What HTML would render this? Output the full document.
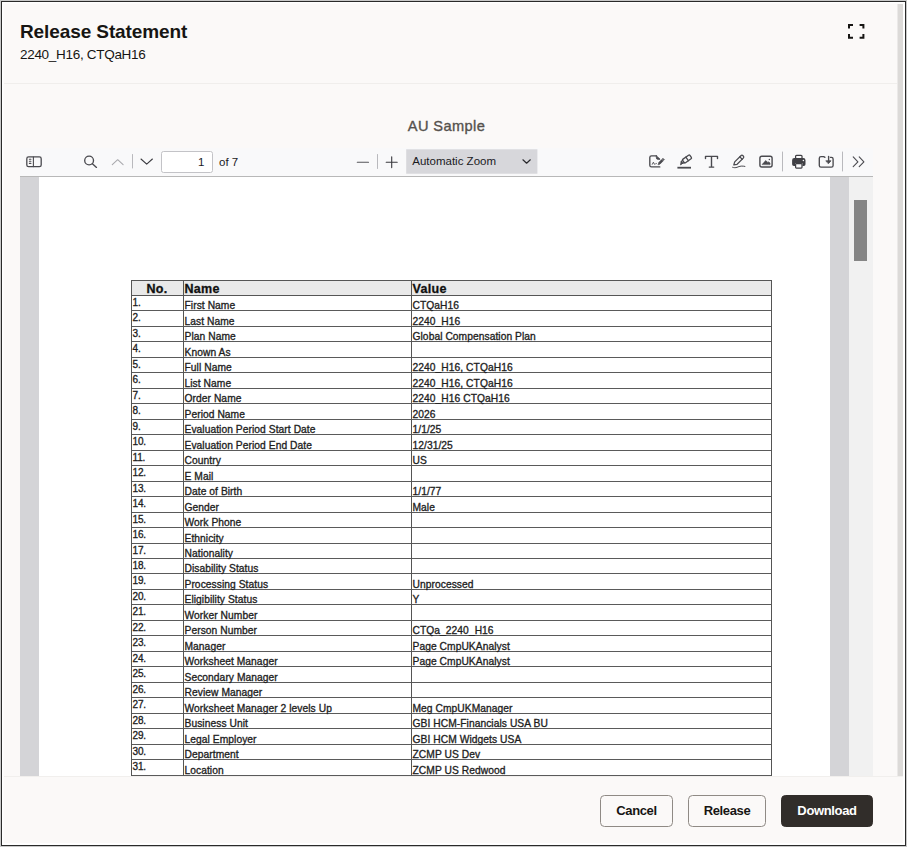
<!DOCTYPE html>
<html lang="en">
<head>
<meta charset="utf-8">
<title>Release Statement</title>
<style>
*{box-sizing:border-box}
html,body{margin:0;padding:0}
body{width:907px;height:847px;overflow:hidden;background:#c9c9c9;font-family:"Liberation Sans",sans-serif;position:relative}
#frame{position:absolute;left:1px;top:1px;width:905px;height:845px;border:1px solid #2a2a2a;background:#fff}
#panel{position:absolute;left:3px;top:3px;width:900px;height:840px;background:#fbf9f8;overflow:hidden;border-left:1px solid #fdfcfc;border-top:1px solid #fdfcfc}
#rstrip{position:absolute;left:897px;top:4px;width:6px;height:772px;background:#dcdad8;border-left:1px solid #ebe9e8}
#rwhite{position:absolute;left:903px;top:2px;width:2px;height:843px;background:#fff}
h1{position:absolute;left:20px;top:19.6px;margin:0;font-size:19px;line-height:24px;font-weight:700;color:#161513;white-space:nowrap;letter-spacing:-0.1px}
#sub{position:absolute;left:20px;top:46px;font-size:13.5px;line-height:18px;color:#161513;white-space:nowrap;letter-spacing:-0.3px}
#hline{position:absolute;left:4px;top:83px;width:893px;height:1px;background:#f0eeec}
#doct{position:absolute;left:0;top:116px;width:893px;text-align:center;font-size:14.6px;letter-spacing:0.4px;line-height:20px;color:#55514d;-webkit-text-stroke:0.35px #55514d;white-space:nowrap}
#viewer{position:absolute;left:20px;top:148px;width:853px;height:628px;overflow:hidden}
#tb{position:absolute;left:0;top:0;width:853px;height:29px;background:#f9f9fa;border-bottom:1px solid #b8b8b8}
#vb{position:absolute;left:0;top:29px;width:829px;height:599px;background:#d4d4d7}
#page{position:absolute;left:19px;top:0;width:791px;height:599px;background:#fff}
#strack{position:absolute;left:829px;top:29px;width:24px;height:599px;background:#f1f1f1}
#sthumb{position:absolute;left:5px;top:23px;width:13px;height:61px;background:#858585}
#tbl{position:absolute;left:92px;top:103px;width:641px;height:500px;font-size:10.25px;letter-spacing:0.06px;color:#1c1c1c;-webkit-text-stroke:0.32px #222}
#tbl .hd{position:absolute;left:0;top:0;width:641px;height:16px;background:#e9e9e9;border-top:1px solid #555;border-bottom:1px solid #555}
#tbl .vl{position:absolute;top:0;width:1px;height:500px;background:#555}
.hd span{position:absolute;top:1px;font-weight:700;font-size:12.5px;letter-spacing:0.3px;line-height:15px;color:#0c0c0c}
.r{position:absolute;left:0;width:641px;border-bottom:1px solid #5a5a5a}
.r span{position:absolute;white-space:nowrap;line-height:10px}
.r .n{left:1.5px;top:2px;font-size:10px;letter-spacing:-0.15px}
.r .k{left:53.5px;bottom:-1.4px}
.r .v{left:281.5px;bottom:-1.4px}
#footer{position:absolute;left:4px;top:776px;width:899px;height:67px;background:#fbf9f8;border-top:1px solid #f1efed}
.btn{position:absolute;top:795px;height:31.5px;border-radius:4.5px;font-size:13px;letter-spacing:-0.35px;font-weight:700;line-height:29.5px;text-align:center;color:#161513;border:1px solid #8f8a85;background:#fbf9f8}
#pgin{position:absolute;left:141px;top:3px;width:52px;height:22px;border:1px solid #c3c3c7;border-radius:2.500px;background:#fff;font-size:11.500px;line-height:21px;text-align:right;padding-right:7.500px;color:#1a1a1e}
#pgof{position:absolute;left:199px;top:3px;font-size:11.500px;line-height:22px;color:#1a1a1e;white-space:nowrap}
#zsel{position:absolute;left:386px;top:1.200px;width:131.500px;height:24.300px;font-size:11.500px;line-height:24px;color:#1a1a1e;white-space:nowrap}
#zsel span{position:absolute;left:6.300px;top:-0.600px}

</style>
</head>
<body>
<div id="frame"></div>
<div id="panel"></div>
<div id="rstrip"></div>
<div id="rwhite"></div>
<h1>Release Statement</h1>
<div id="sub">2240_H16, CTQaH16</div>
<svg id="fs" width="20" height="20" viewBox="846 21 20 20" style="position:absolute;left:846px;top:21px" fill="none" stroke="#161513" stroke-width="2" stroke-linecap="butt" stroke-linejoin="miter"><path d="M849 28.600V25h4M859.600 25h3.800v3.600M849 34v3.700h4M859.600 37.700h3.800V34"/></svg>
<div id="hline"></div>
<div id="doct">AU Sample</div>
<div id="viewer">
  <div id="vb">
    <div id="page">
      <div id="tbl">
        <div class="hd"><span style="left:0;width:52px;text-align:center">No.</span><span style="left:53.5px">Name</span><span style="left:281.5px">Value</span></div>
<div class="r" style="top:16px;height:15px"><span class="n">1.</span><span class="k">First Name</span><span class="v">CTQaH16</span></div>
<div class="r" style="top:31px;height:16px"><span class="n">2.</span><span class="k">Last Name</span><span class="v">2240_H16</span></div>
<div class="r" style="top:47px;height:15px"><span class="n">3.</span><span class="k">Plan Name</span><span class="v">Global Compensation Plan</span></div>
<div class="r" style="top:62px;height:16px"><span class="n">4.</span><span class="k">Known As</span><span class="v"></span></div>
<div class="r" style="top:78px;height:15px"><span class="n">5.</span><span class="k">Full Name</span><span class="v">2240_H16, CTQaH16</span></div>
<div class="r" style="top:93px;height:16px"><span class="n">6.</span><span class="k">List Name</span><span class="v">2240_H16, CTQaH16</span></div>
<div class="r" style="top:109px;height:15px"><span class="n">7.</span><span class="k">Order Name</span><span class="v">2240_H16 CTQaH16</span></div>
<div class="r" style="top:124px;height:16px"><span class="n">8.</span><span class="k">Period Name</span><span class="v">2026</span></div>
<div class="r" style="top:140px;height:15px"><span class="n">9.</span><span class="k">Evaluation Period Start Date</span><span class="v">1/1/25</span></div>
<div class="r" style="top:155px;height:16px"><span class="n">10.</span><span class="k">Evaluation Period End Date</span><span class="v">12/31/25</span></div>
<div class="r" style="top:171px;height:15px"><span class="n">11.</span><span class="k">Country</span><span class="v">US</span></div>
<div class="r" style="top:186px;height:16px"><span class="n">12.</span><span class="k">E Mail</span><span class="v"></span></div>
<div class="r" style="top:202px;height:15px"><span class="n">13.</span><span class="k">Date of Birth</span><span class="v">1/1/77</span></div>
<div class="r" style="top:217px;height:16px"><span class="n">14.</span><span class="k">Gender</span><span class="v">Male</span></div>
<div class="r" style="top:233px;height:15px"><span class="n">15.</span><span class="k">Work Phone</span><span class="v"></span></div>
<div class="r" style="top:248px;height:16px"><span class="n">16.</span><span class="k">Ethnicity</span><span class="v"></span></div>
<div class="r" style="top:264px;height:15px"><span class="n">17.</span><span class="k">Nationality</span><span class="v"></span></div>
<div class="r" style="top:279px;height:15px"><span class="n">18.</span><span class="k">Disability Status</span><span class="v"></span></div>
<div class="r" style="top:294px;height:16px"><span class="n">19.</span><span class="k">Processing Status</span><span class="v">Unprocessed</span></div>
<div class="r" style="top:310px;height:15px"><span class="n">20.</span><span class="k">Eligibility Status</span><span class="v">Y</span></div>
<div class="r" style="top:325px;height:16px"><span class="n">21.</span><span class="k">Worker Number</span><span class="v"></span></div>
<div class="r" style="top:341px;height:15px"><span class="n">22.</span><span class="k">Person Number</span><span class="v">CTQa_2240_H16</span></div>
<div class="r" style="top:356px;height:16px"><span class="n">23.</span><span class="k">Manager</span><span class="v">Page CmpUKAnalyst</span></div>
<div class="r" style="top:372px;height:15px"><span class="n">24.</span><span class="k">Worksheet Manager</span><span class="v">Page CmpUKAnalyst</span></div>
<div class="r" style="top:387px;height:16px"><span class="n">25.</span><span class="k">Secondary Manager</span><span class="v"></span></div>
<div class="r" style="top:403px;height:15px"><span class="n">26.</span><span class="k">Review Manager</span><span class="v"></span></div>
<div class="r" style="top:418px;height:16px"><span class="n">27.</span><span class="k">Worksheet Manager 2 levels Up</span><span class="v">Meg CmpUKManager</span></div>
<div class="r" style="top:434px;height:15px"><span class="n">28.</span><span class="k">Business Unit</span><span class="v">GBI HCM-Financials USA BU</span></div>
<div class="r" style="top:449px;height:16px"><span class="n">29.</span><span class="k">Legal Employer</span><span class="v">GBI HCM Widgets USA</span></div>
<div class="r" style="top:465px;height:15px"><span class="n">30.</span><span class="k">Department</span><span class="v">ZCMP US Dev</span></div>
<div class="r" style="top:480px;height:16px"><span class="n">31.</span><span class="k">Location</span><span class="v">ZCMP US Redwood</span></div>
        <div class="vl" style="left:0"></div>
        <div class="vl" style="left:52px"></div>
        <div class="vl" style="left:280px"></div>
        <div class="vl" style="left:640px"></div>
      </div>
    </div>
  </div>
  <div id="strack"><div id="sthumb"></div></div>
  <div id="tb">
<svg width="853" height="28" viewBox="20 148 853 28" style="position:absolute;left:0;top:0" fill="none" stroke="#4a4a4f" stroke-width="1.1" stroke-linecap="round" stroke-linejoin="round">
<rect x="406.200" y="149.300" width="131.200" height="24.450" fill="#d7d7db" stroke="none"/>
<!-- sidebar toggle -->
<rect x="26.8" y="156.9" width="14.4" height="9.8" rx="1.8" stroke-width="1.3"/>
<path d="M33.4 157v9.6M29.4 159.2h1.5M29.4 161.3h1.5M29.4 163.4h1.5"/>
<!-- search -->
<circle cx="89.1" cy="160.5" r="4.4" stroke-width="1.35"/>
<path d="M92.4 163.7l4.1 3.7" stroke-width="1.35"/>
<!-- up (disabled) -->
<path d="M112.3 164.6l5.4-4.9 5.4 4.9" stroke="#a9a9ad"/>
<path d="M132.5 154.5v13.5" stroke="#b9b9bd" stroke-width="1"/>
<path d="M141 159l5.7 5.1 5.7-5.1" stroke="#3a3a3f"/>
<!-- minus plus -->
<path d="M357.3 162.2h11.2" stroke="#55555a"/>
<path d="M377.5 154.5v14" stroke="#b9b9bd" stroke-width="1"/>
<path d="M386.2 162.2h11M391.7 156.8v10.8" stroke="#3a3a3f"/>
<!-- icons right -->
<g id="i-sign" stroke-width="1.35">
<path d="M659.8 166.9h-8.300a1.700 1.700 0 0 1-1.700-1.700v-7.700a1.700 1.700 0 0 1 1.700-1.700h5"/>
<path d="M656.400 155.900l3.700 3.400h-2.500a1.200 1.200 0 0 1-1.200-1.200z" fill="#4a4a4f" stroke-width="0.900"/>
<path d="M652.300 164.300l1.100-2.100 1.100 2.100M655.500 163.800c.5-.6.900-.6 1.300 0" stroke-width="0.900"/>
<path d="M658.300 164.400l.5-1.900 2.900-2.900 1.400 1.400-2.900 2.900z" fill="#4a4a4f" stroke-width="0.700"/>
<path d="M662.400 158.900l.6-.6 1.400 1.400-.6.600z" fill="#4a4a4f" stroke-width="0.700"/>
</g>
<g id="i-hl">
<g transform="translate(686.700 159.200) rotate(-35)" stroke-width="1.300">
<rect x="-4" y="-2.200" width="8.800" height="4.400" rx="1"/>
<path d="M0.500 -2.200v4.400"/>
<path d="M-4 -1.500l-2 .5v2l2 .5" />
<path d="M-6 -1l-2.300 2.100 2.300 0z" fill="#4a4a4f" stroke-width="0.800"/>
</g>
<path d="M677.400 167.700h13.600" stroke-width="1.800" stroke-linecap="butt"/>
</g>
<g id="i-t" stroke-width="1.400">
<path d="M705.500 158.600v-2.200h12v2.200M711.500 156.500v10.500M709.300 167.100h4.400"/>
</g>
<g id="i-ink" stroke-width="1.250">
<path d="M733.800 164.900l.9-3 6.200-6.200a1.500 1.500 0 0 1 2.100 0l.3.300a1.500 1.500 0 0 1 0 2.100l-6.200 6.200z"/>
<path d="M739.800 156.900l2.400 2.400"/>
<path d="M732.600 167.300c1.600.6 3 .5 4.400 0s2.600-1.100 4.200-1.200 2.500.1 3.700.3" stroke-width="1"/>
</g>
<g id="i-img">
<rect x="759.900" y="156.300" width="12.200" height="10.700" rx="1.900" stroke-width="1.400"/>
<path d="M762.400 164.300l1.400-1.700 2.100-2 1.900 1.900.9-.600 1.300 1.200v1.200z" fill="#4a4a4f" stroke-width="0.700"/>
<circle cx="769.400" cy="159.400" r="0.750" fill="#4a4a4f" stroke="none"/>
</g>
<path d="M782.500 152v19M842.500 152v19" stroke="#b9b9bd" stroke-width="1"/>
<g id="i-print" fill="#3f3f44" stroke="none">
<path d="M794.300 158h9a2.200 2.200 0 0 1 2.200 2.200v4a1.800 1.800 0 0 1-1.800 1.800h-1.200v-2.700h-7.400v2.700h-1.200a1.800 1.800 0 0 1-1.800-1.800v-4a2.200 2.200 0 0 1 2.200-2.200z"/>
<path d="M795.600 158.500v-2.200a.9.900 0 0 1 .9-.9h4.600a.9.900 0 0 1 .9.900v2.200" fill="none" stroke="#3f3f44" stroke-width="1.250"/>
<rect x="795.600" y="163.700" width="6.400" height="4.300" rx="0.800" fill="none" stroke="#3f3f44" stroke-width="1.250"/>
</g>
<circle cx="803.400" cy="160.500" r="0.750" fill="#f9f9fa" stroke="none"/>
<g id="i-dl" stroke-width="1.350">
<path d="M830.400 157.300h1a1.700 1.700 0 0 1 1.700 1.700v6.400a1.700 1.700 0 0 1-1.700 1.700h-10.400a1.700 1.700 0 0 1-1.700-1.700v-7.100a1.700 1.700 0 0 1 1.700-1.700h2.700l1.300 .7"/>
<path d="M828.600 156.500v5"/>
<path d="M826.200 160.800h4.800l-2.400 2.700z" fill="#4a4a4f" stroke-width="0.800"/>
</g>
<path d="M853.200 156.900l4.700 4.900-4.700 4.900M859.200 156.900l4.700 4.900-4.700 4.900" stroke="#4a4a4f" stroke-width="1.100"/>
</svg>
<div id="pgin">1</div>
<div id="pgof">of 7</div>
<div id="zsel"><span>Automatic Zoom</span>
<svg width="10" height="6" viewBox="0 0 10 6" style="position:absolute;left:115.700px;top:10.200px" fill="none" stroke="#2a2a2e" stroke-width="1.200" stroke-linecap="round" stroke-linejoin="round"><path d="M0.900 0.800l3.700 3.400 3.700-3.400"/></svg>
</div>
</div>
</div>
<div id="footer"></div>
<div class="btn" style="left:600px;width:73px">Cancel</div>
<div class="btn" style="left:688px;width:78px">Release</div>
<div class="btn" style="left:781px;width:92px;background:#312d2a;border-color:#312d2a;color:#fff">Download</div>
</body>
</html>
